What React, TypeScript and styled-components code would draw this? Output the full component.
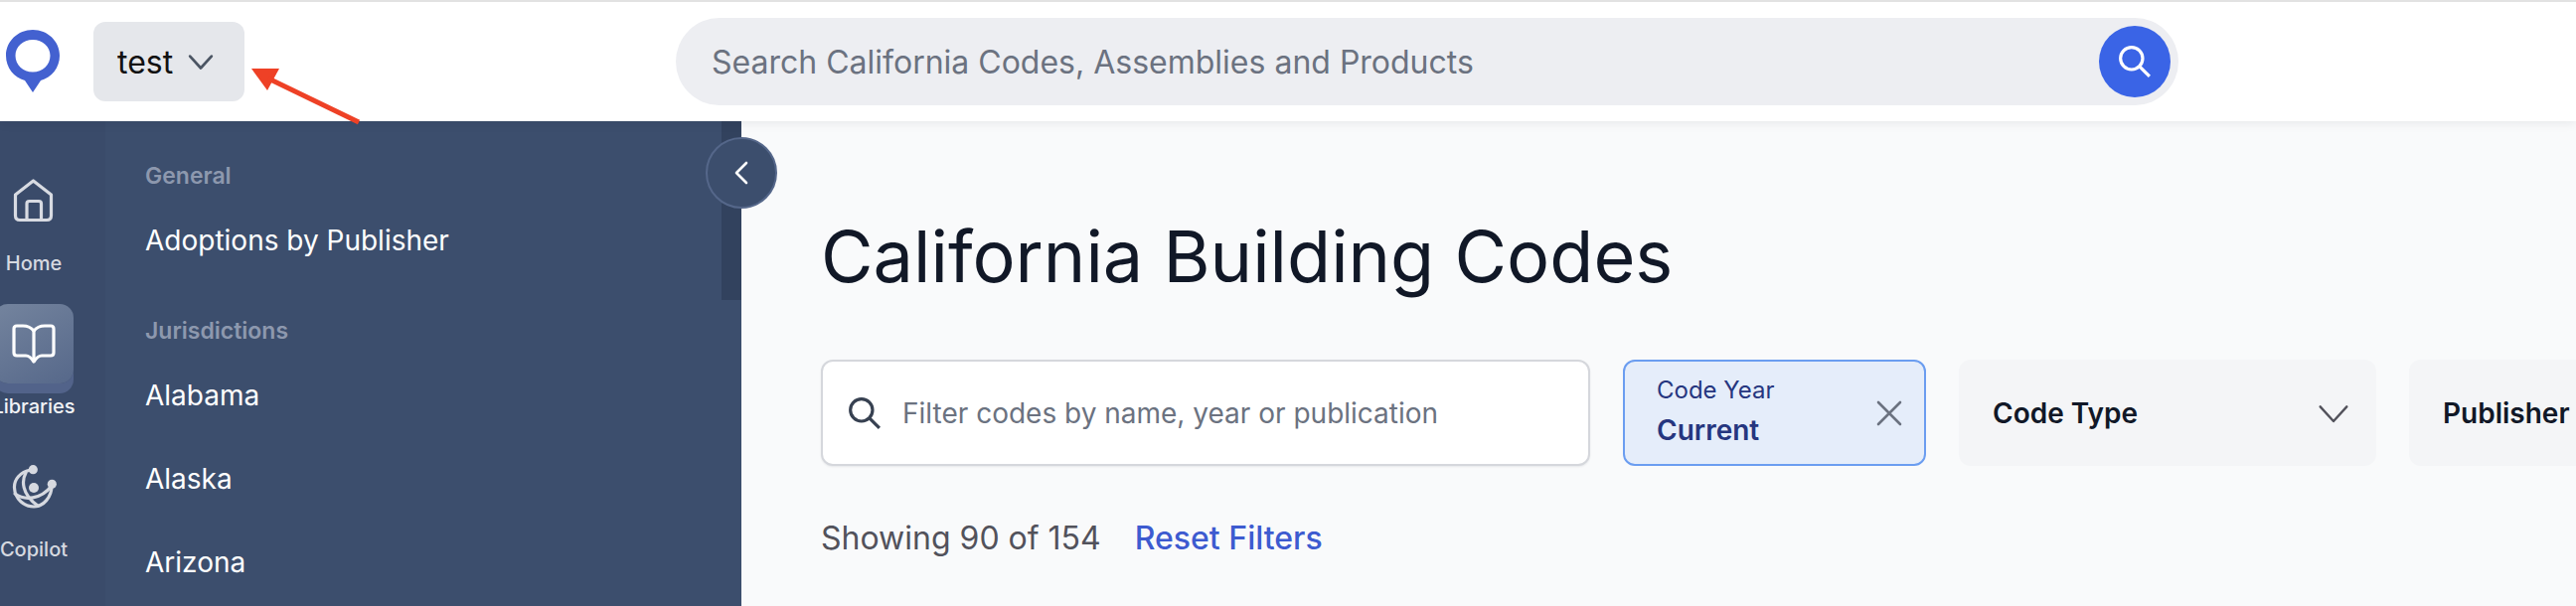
import React from 'react'
import styled, { createGlobalStyle } from 'styled-components'

const GlobalStyle = createGlobalStyle`
  html, body {
    margin: 0;
    padding: 0;
    background: #f9fafb;
  }
  body {
    font-family: Inter, "Liberation Sans", sans-serif;
    overflow: hidden;
  }
`

const Shell = styled.div`
  position: relative;
  width: 2592px;
  height: 610px;
  overflow: hidden;
  display: flex;
  flex-direction: column;
`

const Header = styled.header`
  position: relative;
  z-index: 2;
  flex: none;
  height: 120px;
  border-top: 2px solid #e2e2e2;
  background: #fff;
  box-shadow: 0 2px 10px rgba(17, 24, 39, 0.08);
  display: flex;
  align-items: center;
`

const Logo = styled.svg`
  flex: none;
  width: 54px;
  height: 66px;
  margin: 2px 0 0 6px;
`

const ProjectButton = styled.button`
  flex: none;
  width: 152px;
  height: 80px;
  margin-left: 34px;
  border: 0;
  border-radius: 12px;
  background: #e5e7eb;
  color: #111;
  font: 400 32px Inter, sans-serif;
  display: flex;
  align-items: center;
  gap: 15px;
  padding: 0 0 0 24px;
`

const SearchBar = styled.div`
  flex: none;
  width: 1512px;
  height: 88px;
  margin-left: 434px;
  border-radius: 44px;
  background: #edeef2;
  display: flex;
  align-items: center;
  justify-content: space-between;
  padding: 0 8px 0 36px;
  box-sizing: border-box;
`

const SearchText = styled.span`
  color: #6b7280;
  font-size: 32px;
`

const SearchButton = styled.button`
  width: 72px;
  height: 72px;
  border: 0;
  padding: 0;
  border-radius: 50%;
  background: #3a64e6;
  display: flex;
  align-items: center;
  justify-content: center;
`

const Body = styled.div`
  flex: 1;
  min-height: 0;
  display: flex;
`

const Sidebar = styled.aside`
  position: relative;
  flex: none;
  width: 746px;
  background: #3c4e6d;
  display: flex;
`

const Rail = styled.nav`
  flex: none;
  width: 106px;
  box-sizing: border-box;
  padding-top: 40px;
  background: #3a4b6a;
  display: flex;
  flex-direction: column;
`

const RailItem = styled.div`
  width: 80px;
  height: 144px;
  margin-left: -6px;
  display: flex;
  flex-direction: column;
  align-items: center;
`

const RailIconSlot = styled.div<{ $active?: boolean }>`
  flex: none;
  width: 80px;
  height: 80px;
  display: flex;
  align-items: center;
  justify-content: center;
  border-radius: 14px;
  ${(p) =>
    p.$active
      ? `
    background: linear-gradient(150deg, #74849e 0%, #56688a 100%);
    box-shadow: 0 10px 0 #52638a;
  `
      : ''}
`

const RailLabel = styled.span<{ $active?: boolean }>`
  margin-top: ${(p) => (p.$active ? 11 : 11)}px;
  color: ${(p) => (p.$active ? '#f1f3f6' : '#d6d9e0')};
  font-size: 20px;
  line-height: 24px;
  font-weight: 500;
  white-space: nowrap;
`

const Menu = styled.div`
  flex: 1;
  padding: 41px 0 0 40px;
`

const MenuHeading = styled.div<{ $spaced?: boolean }>`
  color: #8d98ae;
  font-size: 23px;
  font-weight: 600;
  line-height: 28px;
  margin-top: ${(p) => (p.$spaced ? 44 : 0)}px;
`

const MenuLink = styled.div`
  color: #fff;
  font-size: 28px;
  line-height: 36px;
  height: 84px;
  box-sizing: border-box;
  padding-top: 33px;
`

const ScrollThumb = styled.div`
  position: absolute;
  top: 0;
  right: 0;
  width: 20px;
  height: 180px;
  background: #32425e;
`

const CollapseButton = styled.button`
  position: absolute;
  top: 16px;
  left: 710px;
  width: 72px;
  height: 72px;
  padding: 0;
  border-radius: 50%;
  border: 2px solid #55678a;
  background: #3c4e6d;
  display: flex;
  align-items: center;
  justify-content: center;
  box-sizing: border-box;
  z-index: 1;
`

const Main = styled.main`
  flex: 1;
  min-width: 0;
  padding: 92px 0 0 80px;
  background: #f9fafb;
`

const Title = styled.h1`
  margin: 0;
  color: #111827;
  font-size: 72px;
  line-height: 88px;
  font-weight: 400;
  white-space: nowrap;
`

const Filters = styled.div`
  display: flex;
  gap: 33px;
  margin-top: 60px;
`

const FilterInput = styled.div`
  flex: none;
  width: 774px;
  height: 107px;
  box-sizing: border-box;
  border: 2px solid #d5d7dc;
  border-radius: 12px;
  background: #fff;
  box-shadow: 0 1px 2px rgba(17, 24, 39, 0.08);
  display: flex;
  align-items: center;
  gap: 21px;
  padding-left: 25px;
  color: #6b7280;
  font-size: 28px;
`

const ActiveFilter = styled.div`
  flex: none;
  width: 305px;
  height: 107px;
  box-sizing: border-box;
  border: 2px solid #6b9df0;
  border-radius: 12px;
  background: #e5edfa;
  display: flex;
  align-items: center;
  justify-content: space-between;
  padding: 0 22px 0 32px;
`

const ActiveLabel = styled.div`
  color: #26367f;
  font-size: 24px;
  line-height: 30px;
  margin-top: -2px;
`

const ActiveValue = styled.div`
  color: #26367f;
  font-size: 28px;
  line-height: 36px;
  font-weight: 600;
  margin-top: 7px;
`

const FilterSelect = styled.div`
  flex: none;
  width: 420px;
  height: 107px;
  box-sizing: border-box;
  border-radius: 12px;
  background: #f4f5f7;
  display: flex;
  align-items: center;
  justify-content: space-between;
  padding: 0 27px 0 34px;
  color: #111827;
  font-size: 28px;
  font-weight: 600;
`

const ResultRow = styled.div`
  display: flex;
  gap: 34px;
  margin-top: 53px;
  font-size: 32px;
  line-height: 40px;
`

const ResultCount = styled.span`
  color: #52525b;
`

const ResetLink = styled.a`
  color: #3d5bd0;
  font-weight: 500;
`

const Annotation = styled.svg`
  position: absolute;
  top: 0;
  left: 0;
  width: 400px;
  height: 140px;
  z-index: 3;
  pointer-events: none;
`

const Chevron = ({ size, color, width = 2.5 }: { size: number; color: string; width?: number }) => (
  <svg width={size} height={size} viewBox="0 0 24 24" fill="none" stroke={color} strokeWidth={width} strokeLinecap="round" strokeLinejoin="round">
    <path d="M2 7 L12 18 L22 7" />
  </svg>
)

const Magnifier = ({ size, color, width }: { size: number; color: string; width: number }) => (
  <svg width={size} height={size} viewBox="0 0 32 32" fill="none" stroke={color} strokeWidth={width}>
    <circle cx="13" cy="13" r="10.5" />
    <path d="M20.5 20.5 L30 30" />
  </svg>
)

const HomeIcon = () => (
  <svg width="42" height="44" viewBox="0 0 42 44" fill="none" stroke="#d8dbe2" strokeWidth="3.2" strokeLinejoin="round" strokeLinecap="round">
    <path d="M2.5 16 L20.5 2 L38.5 16 V37 Q38.5 41.5 34 41.5 H7 Q2.5 41.5 2.5 37 Z" />
    <path d="M14 41 V25 Q14 22.5 16.5 22.5 H26 Q28.5 22.5 28.5 25 V41" />
  </svg>
)

const BookIcon = () => (
  <svg width="44" height="40" viewBox="0 0 44 40" fill="none" stroke="#fff" strokeWidth="3.2" strokeLinejoin="round" strokeLinecap="round">
    <path d="M22 7 Q18 2 11 2 H5 Q2 2 2 5 V29 Q2 32 5 32 H14 Q18 32 22 38 Q26 32 30 32 H39 Q42 32 42 29 V5 Q42 2 39 2 H33 Q26 2 22 7 Z" />
    <path d="M22 7 V36" />
  </svg>
)

const CopilotIcon = () => (
  <svg width="46" height="46" viewBox="0 0 46 46" fill="none" stroke="#d6d9e0" strokeWidth="3.2" strokeLinecap="round">
    <circle cx="22.3" cy="5.7" r="4.6" fill="#d6d9e0" stroke="none" />
    <circle cx="41.3" cy="20.3" r="4.6" fill="#d6d9e0" stroke="none" />
    <circle cx="23" cy="24" r="5" fill="#d6d9e0" stroke="none" />
    <path d="M20 6 C9 8 3 16 3.5 24 C4 36 14 43 23 43 C33 43 41 33 41 22" />
    <path d="M15 9 C11 16 10 30 27 42" />
    <path d="M4 30 C14 37 30 36 41 22" />
  </svg>
)

const menu = ['Alabama', 'Alaska', 'Arizona']

export default function App() {
  return (
    <Shell>
      <GlobalStyle />
      <Header>
        <Logo viewBox="0 0 54 66">
          <path
            fillRule="evenodd"
            fill="#4361d0"
            d="M27 0 C12 0 0 11.5 0 26 C0 38 8 48 19 51 L27 63 L35 51 C46 48 54 38 54 26 C54 11.5 42 0 27 0 Z M27 10 C37 10 44.5 17 44.5 26 C44.5 35 37 42.5 27 42.5 C17 42.5 9.5 35 9.5 26 C9.5 17 17 10 27 10 Z"
          />
        </Logo>
        <ProjectButton>
          test
          <Chevron size={26} color="#4b5563" />
        </ProjectButton>
        <SearchBar>
          <SearchText>Search California Codes, Assemblies and Products</SearchText>
          <SearchButton>
            <Magnifier size={34} color="#fff" width={3} />
          </SearchButton>
        </SearchBar>
      </Header>
      <Body>
        <Sidebar>
          <Rail>
            <RailItem>
              <RailIconSlot>
                <HomeIcon />
              </RailIconSlot>
              <RailLabel>Home</RailLabel>
            </RailItem>
            <RailItem>
              <RailIconSlot $active>
                <BookIcon />
              </RailIconSlot>
              <RailLabel $active>Libraries</RailLabel>
            </RailItem>
            <RailItem>
              <RailIconSlot>
                <CopilotIcon />
              </RailIconSlot>
              <RailLabel>Copilot</RailLabel>
            </RailItem>
          </Rail>
          <Menu>
            <MenuHeading>General</MenuHeading>
            <MenuLink>Adoptions by Publisher</MenuLink>
            <MenuHeading $spaced>Jurisdictions</MenuHeading>
            {menu.map((name) => (
              <MenuLink key={name}>{name}</MenuLink>
            ))}
          </Menu>
          <ScrollThumb />
          <CollapseButton>
            <svg width="20" height="24" viewBox="0 0 20 24" fill="none" stroke="#fff" strokeWidth="2.6" strokeLinecap="round" strokeLinejoin="round">
              <path d="M15 2 L5 12 L15 22" />
            </svg>
          </CollapseButton>
        </Sidebar>
        <Main>
          <Title>California Building Codes</Title>
          <Filters>
            <FilterInput>
              <Magnifier size={34} color="#374151" width={3} />
              Filter codes by name, year or publication
            </FilterInput>
            <ActiveFilter>
              <div>
                <ActiveLabel>Code Year</ActiveLabel>
                <ActiveValue>Current</ActiveValue>
              </div>
              <svg width="26" height="26" viewBox="0 0 26 26" fill="none" stroke="#6b7280" strokeWidth="2.6" strokeLinecap="round">
                <path d="M2 2 L24 24 M24 2 L2 24" />
              </svg>
            </ActiveFilter>
            <FilterSelect>
              Code Type
              <Chevron size={32} color="#52525b" width={1.8} />
            </FilterSelect>
            <FilterSelect>
              Publisher
              <Chevron size={32} color="#52525b" width={1.8} />
            </FilterSelect>
          </Filters>
          <ResultRow>
            <ResultCount>Showing 90 of 154</ResultCount>
            <ResetLink>Reset Filters</ResetLink>
          </ResultRow>
        </Main>
      </Body>
      <Annotation viewBox="0 0 400 140">
        <path d="M253 69 H281 L269 91 Z" fill="#ee4126" />
        <path d="M270 79 L361 123" stroke="#ee4126" strokeWidth="5" fill="none" />
      </Annotation>
    </Shell>
  )
}
